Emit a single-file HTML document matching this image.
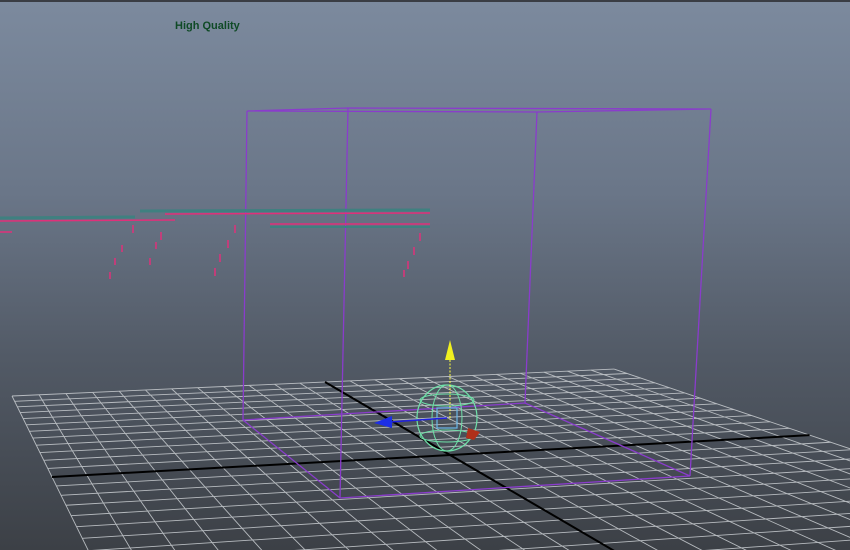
<!DOCTYPE html>
<html><head><style>
html,body{margin:0;padding:0;overflow:hidden;width:850px;height:550px}
body{background:linear-gradient(#7c8a9e 0%,#6a7688 35%,#525a66 65%,#3c4046 100%);position:relative;font-family:"Liberation Sans",sans-serif}
.top{position:absolute;left:0;top:0;width:850px;height:2px;background:#3a3d44}
.lbl{position:absolute;left:175px;top:20px;font-size:11px;font-weight:bold;color:#0f4a26}
svg{position:absolute;left:0;top:0;display:block}
</style></head><body>
<div class="top"></div>
<div class="lbl">High Quality</div>
<svg width="850" height="550" id="s">
<g id="grid" stroke="#c4c8cc" stroke-width="0.9" opacity="0.9"></g>
<g id="axes" stroke="#000" stroke-width="2"></g>
<g stroke="#8a3ccc" stroke-width="1.3" fill="none">
<polyline points="247,111 348,108 711,109 537,112 247,111"/>
<line x1="247" y1="111" x2="243" y2="420"/>
<line x1="711" y1="109" x2="690" y2="476"/>
<line x1="348" y1="108" x2="340" y2="498"/>
<line x1="537" y1="112" x2="525" y2="403"/>
<polyline points="243,420 525,403 690,476 340,498 243,420"/>
</g>
<g fill="none">
<line x1="0" y1="218" x2="135" y2="217" stroke="#3f8080" stroke-width="3"/>
<line x1="0" y1="221" x2="175" y2="220" stroke="#e0307a" stroke-width="1.5"/>
<line x1="140" y1="211" x2="430" y2="210" stroke="#3f8080" stroke-width="3"/>
<line x1="165" y1="214" x2="430" y2="213" stroke="#e0307a" stroke-width="1.5"/>
<line x1="270" y1="224" x2="430" y2="224" stroke="#e0307a" stroke-width="1.5"/>
<line x1="270" y1="227" x2="430" y2="227" stroke="#3f8080" stroke-width="2"/>
<line x1="0" y1="232" x2="12" y2="232" stroke="#e0307a" stroke-width="1.5"/>
<path d="M133 225v8 M161 232v8 M156 242v7 M150 258v7 M122 245v7 M115 258v7 M110 272v7 M235 225v8 M228 240v8 M220 254v8 M215 268v8 M420 233v8 M414 247v8 M408 261v8 M404 270v7" stroke="#e0307a" stroke-width="1.5"/>
</g>
<g fill="none">
<ellipse cx="447" cy="418" rx="30" ry="33" stroke="#6fe0a8" stroke-width="1.2"/>
<ellipse cx="447" cy="418" rx="15" ry="33" stroke="#6fe0a8" stroke-width="1"/>
<ellipse cx="447" cy="400" rx="27" ry="6" stroke="#6fe0a8" stroke-width="1"/>
<ellipse cx="447" cy="436" rx="27" ry="6" stroke="#6fe0a8" stroke-width="1"/>
<rect x="437" y="408" width="20" height="20" stroke="#6ab8e8" stroke-width="1.2"/>
<line x1="450" y1="360" x2="450" y2="420" stroke="#ffff40" stroke-dasharray="2,1.5"/>
<line x1="390" y1="422" x2="447" y2="418" stroke="#2020e0" stroke-width="1.5"/>
</g>
<polygon points="450,340 445,360 455,360" fill="#f0f020"/>
<polygon points="374,423 392,416 392,428" fill="#1c2ee6"/>
<polygon points="468,428 480,432 474,440 466,438" fill="#b0301a"/>
</svg>
<script>
function solve(A,b){const n=b.length;for(let i=0;i<n;i++){let m=i;for(let r=i+1;r<n;r++)if(Math.abs(A[r][i])>Math.abs(A[m][i]))m=r;[A[i],A[m]]=[A[m],A[i]];[b[i],b[m]]=[b[m],b[i]];for(let r=i+1;r<n;r++){const f=A[r][i]/A[i][i];for(let c=i;c<n;c++)A[r][c]-=f*A[i][c];b[r]-=f*b[i];}}const x=new Array(n);for(let i=n-1;i>=0;i--){let s=b[i];for(let c=i+1;c<n;c++)s-=A[i][c]*x[c];x[i]=s/A[i][i];}return x;}
const P=[[-1,-1,12,396],[0,-1,325,382],[-1,0,52,477],[0,0,450,455]];
const A=[],b=[];for(const[x,y,u,v]of P){A.push([x,y,1,0,0,0,-u*x,-u*y]);b.push(u);A.push([0,0,0,x,y,1,-v*x,-v*y]);b.push(v);}
const h=solve(A,b);
function M(x,y){const w=h[6]*x+h[7]*y+1;return[(h[0]*x+h[1]*y+h[2])/w,(h[3]*x+h[4]*y+h[5])/w];}
const g=document.getElementById('grid'),ax=document.getElementById('axes');const N=24;
function L(p,q,el){const l=document.createElementNS('http://www.w3.org/2000/svg','line');l.setAttribute('x1',p[0]);l.setAttribute('y1',p[1]);l.setAttribute('x2',q[0]);l.setAttribute('y2',q[1]);el.appendChild(l);}
const zmax=1;
for(let i=0;i<=N;i++){const t=-1+2*i/N;L(M(t,-1),M(t,zmax),g);L(M(-1,t),M(1,t),g);}
L(M(-1,0),M(1,0),ax);L(M(0,-1),M(0,zmax),ax);
</script>
</body></html>
